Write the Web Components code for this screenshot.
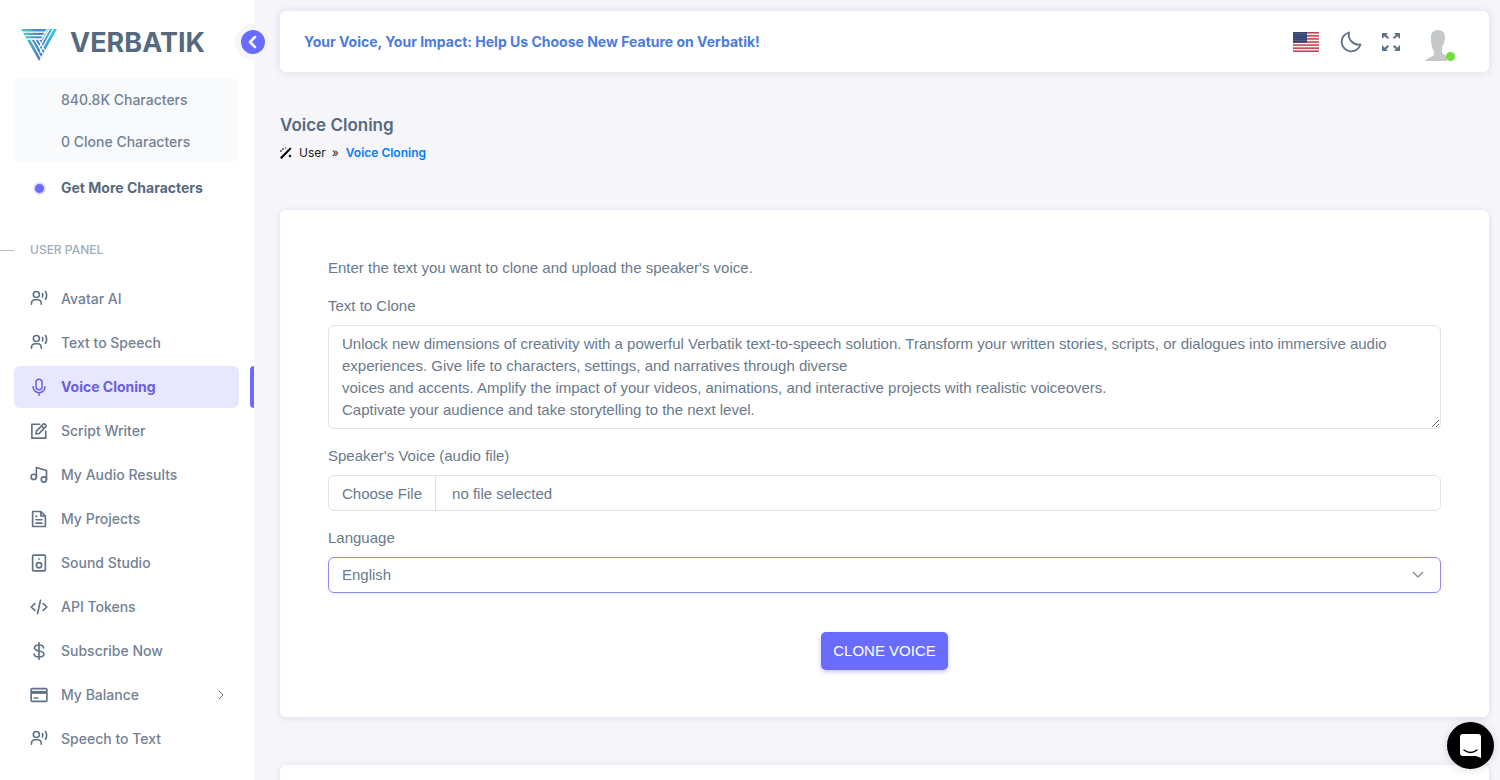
<!DOCTYPE html>
<html lang="en">
<head>
<meta charset="utf-8">
<meta name="viewport" content="width=device-width, initial-scale=1">
<title>Voice Cloning - Verbatik</title>
<style>
  html { scrollbar-width: none; }
  body {
    margin: 0;
    background: #f5f5fa;
    color: #697a8d;
    font: 15px/22px "Liberation Sans", Arial, sans-serif;
    --ui: Inter, "Open Sans", sans-serif;
    --primary: #696cff;
    --heading: #566a7f;
    --line: #dfe3e8;
  }
</style>
</head>
<body>
<vb-app>
  <vb-sidebar slot="side">
    <vb-nav-item icon="voice" href="#avatar">Avatar AI</vb-nav-item>
    <vb-nav-item icon="voice" href="#tts">Text to Speech</vb-nav-item>
    <vb-nav-item icon="mic" href="#cloning" active>Voice Cloning</vb-nav-item>
    <vb-nav-item icon="edit" href="#script">Script Writer</vb-nav-item>
    <vb-nav-item icon="music" href="#results">My Audio Results</vb-nav-item>
    <vb-nav-item icon="file" href="#projects">My Projects</vb-nav-item>
    <vb-nav-item icon="speaker" href="#studio">Sound Studio</vb-nav-item>
    <vb-nav-item icon="code" href="#tokens">API Tokens</vb-nav-item>
    <vb-nav-item icon="dollar" href="#subscribe">Subscribe Now</vb-nav-item>
    <vb-nav-item icon="card" href="#balance" submenu>My Balance</vb-nav-item>
    <vb-nav-item icon="voice" href="#stt">Speech to Text</vb-nav-item>
  </vb-sidebar>
  <vb-topbar>Your Voice, Your Impact: Help Us Choose New Feature on Verbatik!</vb-topbar>
  <vb-page-title section="User">Voice Cloning</vb-page-title>
  <vb-card><vb-clone-form></vb-clone-form></vb-card>
  <vb-card></vb-card>
</vb-app>
<vb-chat></vb-chat>

<script>
const stroke = (w, d) => `<g fill="none" stroke="currentColor" stroke-width="${w}" stroke-linecap="round" stroke-linejoin="round">${d}</g>`;
const ICONS = {
  voice: stroke(2.2, '<circle cx="8.500" cy="6" r="4"/><path d="M2 19v-1.500a4.500 4.500 0 0 1 4.500-4.500h4a4.500 4.500 0 0 1 4.500 4.500V19M16.500 4.500c.8 1.300.8 3.500 0 4.800M20.500 2c2.200 2.800 2.200 7.500 0 10.300"/>'),
  mic: stroke(2, '<rect x="8" y="1.500" width="8" height="14" rx="4"/><path d="M4 11.500c0 4.500 3.500 8 8 8s8-3.500 8-8M12 19.500V23"/>'),
  edit: stroke(2.200, '<path d="M13 3H2.500v18.500H21V12M8 16l.6-4L18 2.600c1-1 4.400 2.400 3.400 3.400L12 15.400zM15.500 5.500l3 3"/>'),
  music: stroke(2.200, '<circle cx="5" cy="14.500" r="3.500"/><circle cx="18.500" cy="18" r="3.500"/><path d="M8.500 14.500V2L22 6v12"/>'),
  file: stroke(2.200, '<path d="M3.500 22V2h11l6 6v14zM14.500 2v6h6M8 13h8M8 17.500h8M8 8.500h1"/>'),
  speaker: stroke(2.200, '<rect x="3.500" y="1.500" width="17" height="21" rx="1.500"/><circle cx="12" cy="15" r="3.500"/><path d="M12 6.500v.5"/>'),
  code: stroke(2.200, '<path d="M6.500 7.500L1.500 12l5 4.500M17.500 7.500l5 4.500-5 4.500M14 3l-4 18"/>'),
  dollar: stroke(2.200, '<path d="M12 1v22M18 8c0-2.500-2.500-4-6-4S6 5.500 6 8c0 5.500 12.500 2.500 12.500 8 0 2.500-2.500 4-6.500 4s-6.500-1.500-6.500-4"/>'),
  card: stroke(2.200, '<rect x="1.500" y="3.500" width="21" height="17" rx="1.500"/><path d="M2 8.500h20" stroke-width="4" stroke-linecap="butt"/><path d="M5.500 16h5"/>'),
};
const svg = (body, box = '0 0 24 24') => `<svg viewBox="${box}" aria-hidden="true">${body}</svg>`;

class Base extends HTMLElement {
  connectedCallback() {
    if (this.shadowRoot) return;
    this.attachShadow({ mode: 'open' }).innerHTML = this.view();
  }
}

customElements.define('vb-app', class extends Base {
  view() { return `
    <style>
      :host { display: grid; grid-template-columns: 254px minmax(0, 1fr); min-height: 100vh; }
      main { padding: 11px 11px 0 26px; }
    </style>
    <slot name="side"></slot>
    <main><slot></slot></main>`; }
});

customElements.define('vb-sidebar', class extends Base {
  view() { return `
    <style>
      :host { display: block; position: sticky; top: 0; z-index: 1; box-sizing: border-box; height: 100vh; background: #fff; font: 500 14px/22px var(--ui); color: #738194; }
      header { display: flex; align-items: center; height: 36px; padding: 25px 0 17px 20px; color: var(--heading); }
      .mark { width: 38px; height: 34px; margin-top: 4px; }
      .brand { margin-left: 12px; font-size: 27px; line-height: 36px; font-weight: 700; color: inherit; text-decoration: none; }
      button { position: absolute; top: 24px; right: -17px; width: 36px; height: 36px; padding: 0; border: 6px solid #f5f5fa; border-radius: 50%; background: var(--primary); color: #fff; }
      button svg { display: block; width: 24px; height: 24px; }
      ul { list-style: none; margin: 0 16px 0 14px; padding: 0; background: #f8fafc; border-radius: 6px; }
      li { padding: 11px 0 9px 47px; }
      .more { display: flex; align-items: center; height: 42px; margin: 5px 16px 0 14px; padding-left: 20px; font-weight: 700; color: var(--heading); text-decoration: none; }
      .more::before { content: ""; width: 9px; height: 9px; margin-right: 16px; border: 1px solid #e1e2ff; border-radius: 50%; background: var(--primary); box-shadow: 0 0 0 1px #e1e2ff; }
      h2 { display: flex; align-items: center; gap: 16px; margin: 30px 0 17px; font-size: 12px; line-height: 22px; font-weight: 500; color: #a1acb8; }
      h2::before { content: ""; width: 14px; height: 1px; background: #b4bdc6; }
      nav { display: grid; gap: 2px; }
      .clip { height: calc(100vh - 78px); overflow: hidden; }
    </style>
    <header>
      <svg class="mark" viewBox="0 0 38 34" aria-hidden="true">
        <defs><linearGradient id="g" x1="0" y1="0" x2="1" y2="0"><stop offset="0" stop-color="#4fd3b4"/><stop offset=".5" stop-color="#4a80c6"/><stop offset="1" stop-color="#2fd0ea"/></linearGradient></defs>
        <path fill="url(#g)" d="M1 1h36L19 33z"/>
        <path fill="none" stroke="#fff" stroke-width="1.300" d="M2 4.200h24.500M5 7.600h18M30 0L19.500 19M33.700 0L20 24.500M7 11h14M10.500 11l10.500 19M14.500 11l8.500 15M18.200 11l6.500 11.500M28 0l-7 12"/>
      </svg>
      <a class="brand" href="#home">VERBATIK</a>
    </header>
    <button type="button" aria-label="Collapse menu">${svg(stroke(2.5, '<path d="M14 7l-5 5 5 5"/>'))}</button>
    <div class="clip">
      <ul><li>840.8K Characters</li><li>0 Clone Characters</li></ul>
      <a class="more" href="#more">Get More Characters</a>
      <h2>USER PANEL</h2>
      <nav aria-label="User panel"><slot></slot></nav>
    </div>`; }
});

customElements.define('vb-nav-item', class extends Base {
  view() {
    const active = this.hasAttribute('active');
    return `
    <style>
      :host { display: flex; justify-content: space-between; }
      a { display: flex; flex: 1; align-items: center; box-sizing: border-box; height: 42px; margin: 0 11px 0 14px; padding: 0 12px 0 16px; border-radius: 6px; color: inherit; text-decoration: none; }
      svg { width: 18px; height: 18px; margin-right: 13px; color: #5f7186; }
      .arrow { width: 14px; height: 14px; margin: 0 -1px 0 auto; }
      :host([active]) a { background: #e7e7ff; color: #6a60e0; font-weight: 700; }
      :host([active]) svg { color: #6a60e0; }
      i { width: 4px; }
      :host([active]) i { background: var(--primary); border-radius: 4px 0 0 4px; }
    </style>
    <a href="${this.getAttribute('href')}"${active ? ' aria-current="page"' : ''}>${svg(ICONS[this.getAttribute('icon')])}<slot></slot>${
      this.hasAttribute('submenu') ? '<svg class="arrow" viewBox="0 0 14 14" aria-hidden="true"><path d="M5 3l4 4-4 4" fill="none" stroke="currentColor"/></svg>' : ''}</a><i></i>`;
  }
});

customElements.define('vb-topbar', class extends Base {
  view() {
    const stripes = [0,2,4,6,8,10,12].map(i => `<path fill="#c9404f" d="M0 ${i}h26v1H0z"/>`).join('');
    let stars = '';
    for (let y = 1; y < 7; y += 1.5) for (let x = 1; x < 14; x += 2) stars += `<circle cx="${x}" cy="${y}" r=".3" fill="#c5cde0"/>`;
    return `
    <style>
      :host { display: flex; align-items: center; box-sizing: border-box; height: 61px; padding: 0 34px 0 24px; border-radius: 6px; background: #fff; box-shadow: 0 0 6px 2px rgba(67, 89, 113, .09); }
      a { font: 700 14px/22px var(--ui); color: #4c7be0; text-decoration: none; }
      .tools { display: flex; align-items: center; margin-left: auto; }
      button { display: block; padding: 0; border: 0; background: none; color: #5f7186; }
      svg { display: block; }
      .flag { width: 26px; height: 20px; margin: 1px 20px 0 0; }
      .moon { width: 24px; height: 24px; margin-right: 18px; }
      .full { width: 20px; height: 20px; margin-right: 24px; }
      .user { position: relative; }
      .user svg { width: 30px; height: 32px; margin-top: 7px; }
      .user::after { content: ""; position: absolute; right: 0; bottom: 0; width: 9px; height: 9px; border-radius: 50%; background: #71dd37; }
    </style>
    <a href="#vote"><slot></slot></a>
    <div class="tools">
      <button class="flag" type="button" aria-label="Language"><svg width="26" height="20" viewBox="0 0 26 13" preserveAspectRatio="none"><path fill="#f6eff1" d="M0 0h26v13H0z"/>${stripes}<path fill="#34446f" d="M0 0h14v7H0z"/>${stars}</svg></button>
      <button class="moon" type="button" aria-label="Dark mode">${svg(stroke(1.8, '<path d="M10 2.500A9.600 9.600 0 1 0 21.500 14.500C14.500 15.500 8.500 9.500 10 2.500z"/>'))}</button>
      <button class="full" type="button" aria-label="Full screen">${svg('<path fill="currentColor" d="M1 1h6L5.200 2.800l2.800 2.800-1.500 1.500-2.800-2.800L1 7zM19 1v6l-2.700-2.700-2.800 2.800L12 5.600l2.800-2.800L13 1zM1 19v-6l2.700 2.700 2.800-2.800L8 14.400l-2.800 2.800L7 19zM19 19h-6l1.800-1.800-2.800-2.800 1.500-1.500 2.800 2.800L19 13z"/>', '0 0 20 20')}</button>
      <button class="user" type="button" aria-label="Account">${svg('<path fill="#c6c9cb" d="M6 8C6 3 9 1 13 1s7 2 7 7c.3 2-.3 3-.7 4-.3 3-1.300 5-2.300 6v4c0 3 3 4 5 5v5H0c1-2 3-2.500 5-3.500 3-1.500 4-2 4-3.500v-3c-1.500-1-2-4-2.300-6C6 11 5.500 10 6 8z"/>', '0 0 30 32')}</button>
    </div>`;
  }
});

customElements.define('vb-page-title', class extends Base {
  view() { return `
    <style>
      :host { display: block; margin: 41px 0 46px; font-family: var(--ui); }
      h1 { margin: 0; font-size: 17px; line-height: 24px; font-weight: 600; color: var(--heading); }
      nav { display: flex; align-items: center; margin-top: 5px; font-size: 12px; line-height: 22px; color: #1c1d20; }
      nav svg { width: 12px; height: 12px; margin-right: 7px; }
      nav span { margin: 0 7px 0 6px; }
      a { font-weight: 600; color: #007dfc; text-decoration: none; }
    </style>
    <h1><slot></slot></h1>
    <nav aria-label="Breadcrumb">${svg('<path d="M0 10.500L10 .5l1.500 1.300L1.700 12zM2 2l1-1 1 1-1 1zM0 4l1-1 1 1-1 1zM5 1l.7-.7.7.7-.7.7zM8.500 9L10 7.500 11.500 9 10 10.500z"/>', '0 0 12 12')}${this.getAttribute('section')}<span>»</span><a href="#cloning">${this.textContent}</a></nav>`; }
});

customElements.define('vb-card', class extends Base {
  view() { return `
    <style>
      :host { display: block; min-height: 60px; margin-bottom: 48px; padding: 47px 48px; border-radius: 6px; background: #fff; box-shadow: 0 1px 5px 1px rgba(67, 89, 113, .10); }
    </style>
    <slot></slot>`; }
});

customElements.define('vb-clone-form', class extends Base {
  view() { return `
    <style>
      :host { display: block; }
      p { margin: 0 0 16px; }
      label { display: block; margin-bottom: 8px; }
      textarea, select, .file { display: block; box-sizing: border-box; width: 100%; margin: 0 0 16px; border: 1px solid var(--line); border-radius: 6px; background: #fff; color: inherit; font: inherit; }
      textarea { height: 104px; padding: 7px 13px; overflow: hidden; resize: vertical; }
      .file { position: relative; display: flex; height: 36px; line-height: 36px; }
      .file b { padding: 0 13px; border-right: 1px solid var(--line); font-weight: 400; }
      .file span { padding-left: 16px; }
      .file input { position: absolute; inset: 0; width: 100%; opacity: 0; }
      select { height: 36px; padding: 0 13px; border-color: #8f8be8; appearance: none; box-shadow: 0 1px 4px rgba(105, 108, 255, .12);
        background: #fff url('data:image/svg+xml,<svg xmlns="http://www.w3.org/2000/svg" width="12" height="8" viewBox="0 0 12 8"><path d="M1 1l5 5 5-5" fill="none" stroke="%238b939c" stroke-width="1.500"/></svg>') no-repeat right 16px center; }
      button { display: block; height: 38px; margin: 39px auto 0; padding: 0 12px; border: 0; border-radius: 5px; background: var(--primary); color: #fff; font: inherit; box-shadow: 0 2px 4px rgba(105, 108, 255, .4); }
    </style>
    <form>
      <p>Enter the text you want to clone and upload the speaker's voice.</p>
      <label for="text">Text to Clone</label>
      <textarea id="text">Unlock new dimensions of creativity with a powerful Verbatik text-to-speech solution. Transform your written stories, scripts, or dialogues into immersive audio experiences. Give life to characters, settings, and narratives through diverse
voices and accents. Amplify the impact of your videos, animations, and interactive projects with realistic voiceovers.
Captivate your audience and take storytelling to the next level.</textarea>
      <label for="voice">Speaker's Voice (audio file)</label>
      <div class="file"><b>Choose File</b><span>no file selected</span><input id="voice" type="file" accept="audio/*"></div>
      <label for="lang">Language</label>
      <select id="lang"><option>English</option></select>
      <button type="button">CLONE VOICE</button>
    </form>`; }
});

customElements.define('vb-chat', class extends Base {
  view() { return `
    <style>
      :host { position: fixed; right: 6px; bottom: 11px; z-index: 2; }
      button { display: block; width: 47px; height: 47px; padding: 0; border: 0; border-radius: 50%; background: #000; box-shadow: 0 1px 8px rgba(0, 0, 0, .15); }
      svg { display: block; width: 24px; height: 26px; margin: 0 auto; }
    </style>
    <button type="button" aria-label="Open chat">${svg('<path fill="#fff" d="M4 1h15a3 3 0 0 1 3 3v21l-5-2H4a3 3 0 0 1-3-3V4a3 3 0 0 1 3-3z"/><path d="M5 17c4 3 9 3 13 0" fill="none" stroke="#000" stroke-width="1.500" stroke-linecap="round"/>', '0 0 24 26')}</button>`; }
});
</script>
</body>
</html>
